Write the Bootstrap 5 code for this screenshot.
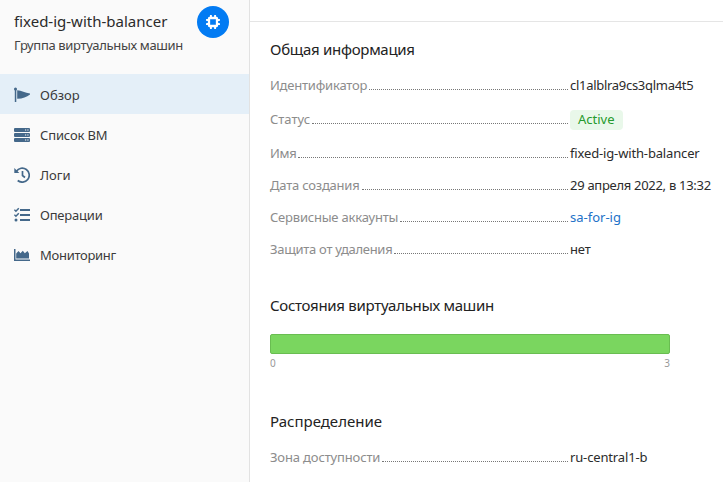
<!DOCTYPE html>
<html lang="ru">
<head>
<meta charset="utf-8">
<meta name="viewport" content="width=device-width, initial-scale=1">
<title>fixed-ig-with-balancer</title>
<link href="https://cdn.jsdelivr.net/npm/bootstrap@5.3.0/dist/css/bootstrap.min.css" rel="stylesheet">
<style>
body{font:13px/20px "Noto Sans","Open Sans",sans-serif;color:#2b2b2b;background:#fff}
.shell{height:482px}
.sidebar{width:250px;background:#fafafa;border-right:1px solid #e2e2e2}
.side-head{height:74px;padding:11px 20px 0 14px}
.side-title{font-size:15px;line-height:20px}
.side-sub{line-height:20px;margin-top:4px;color:#444;letter-spacing:-.34px}
.avatar-dot{width:32px;height:32px;background:#027bf3;margin-top:-5px}
.side-nav .nav-link{height:40px;padding:2px 0 0 14px;color:#3a3a3a;gap:10px;line-height:20px}
.side-nav .nav-link.active{background:#e4eff8}
.side-nav svg{color:#44688a;margin-top:-1px}
.topline{height:22px;border-bottom:1px solid #e5e5e5}
.content{padding:17px 0 0 20px}
.section-title{font-size:15px;line-height:20px;font-weight:400;color:#222;margin:0 0 16px}
.section-gap{margin-top:36px}
.info-row{height:20px;margin-bottom:12px}
.info-row.tall{margin-bottom:14px}
.info-row:last-child{margin-bottom:0}
.info-label{width:300px;color:#8c8c8c}
.info-label::after{content:"";flex:1;height:15px;margin:0 2px;border-bottom:1px dotted #777}
.status-badge{background:#e9f8ea;color:#259a2c;border-radius:4px;height:20px;line-height:19px;margin-top:1px;padding:0 8px}
.account-link{color:#2272c8}
.vm-bar{width:400px;height:20px;margin-top:19px;background:#7ad65f;border:1px solid #69bd51;border-radius:2px}
.scale{width:400px;font-size:10px;line-height:18px;color:#999}
.zone{margin-top:39px}
.ls-1{letter-spacing:-.15px}
.ls-2{letter-spacing:-.21px}
.ls-3{letter-spacing:-.29px}
</style>
<script src="https://cdn.jsdelivr.net/npm/bootstrap@5.3.0/dist/js/bootstrap.bundle.min.js"></script>
</head>
<body>
<div class="shell d-flex overflow-hidden">
<aside class="sidebar flex-shrink-0">
<div class="side-head d-flex justify-content-between">
<div class="text-nowrap"><div class="side-title">fixed-ig-with-balancer</div><div class="side-sub">Группа виртуальных машин</div></div>
<div class="avatar-dot rounded-circle d-flex align-items-center justify-content-center flex-shrink-0">
<svg width="14" height="14" viewBox="0 0 14 14" fill="none" stroke="#fff"><rect x="3" y="3" width="8" height="8" rx=".5" stroke-width="2.300"/><path d="M4.900.8v2M9.100.8v2M4.900 11.200v2M9.100 11.200v2M.8 4.900h2M.8 9.100h2M11.200 4.900h2M11.200 9.100h2" stroke-width="2" stroke-linecap="round"/></svg>
</div>
</div>
<nav class="side-nav nav flex-column">
<a class="nav-link active d-flex align-items-center" href="#"><svg width="16" height="16" viewBox="0 0 16 16" fill="currentColor"><circle cx="1.500" cy="2" r="1.500"/><path d="M.8 2h1.500v13H.8zM3.200 3.200C7.500 3.400 11 5.700 16 6.500v1C12.500 10.200 9 11.600 3.200 11.800z"/></svg><span>Обзор</span></a>
<a class="nav-link d-flex align-items-center" href="#"><svg width="16" height="16" viewBox="0 0 16 16" fill="currentColor"><rect y="1" width="16" height="4" rx="1"/><rect y="6" width="16" height="4" rx="1"/><rect y="11" width="16" height="4" rx="1"/><path d="M11 2.500h1.200v1H11zM13.300 2.500h1.200v1h-1.200zM11 7.500h1.200v1H11zM13.300 7.500h1.200v1h-1.200zM11 12.500h1.200v1H11zM13.300 12.500h1.200v1h-1.200z" fill="#fafafa"/></svg><span class="ls-1">Список ВМ</span></a>
<a class="nav-link d-flex align-items-center" href="#"><svg width="16" height="16" viewBox="0 0 16 16" fill="none" stroke="currentColor" stroke-width="1.700"><path d="M2.400 4.300A7 7 0 1 1 3.700 13.500M8.500 4v4.500l2.500 2"/><path d="M.3 1v5h5z" fill="currentColor" stroke="none"/></svg><span>Логи</span></a>
<a class="nav-link d-flex align-items-center" href="#"><svg width="16" height="16" viewBox="0 0 16 16" fill="none" stroke="currentColor"><path d="M6 3h10M6 8h10M6 13h10" stroke-width="1.900"/><path d="M.4 2.700l1.500 1.500L4.800 1.200M.4 7.700l1.500 1.500 2.900-3" stroke-width="1.500"/><circle cx="2" cy="13" r="1.500" fill="currentColor" stroke="none"/></svg><span class="ls-2">Операции</span></a>
<a class="nav-link d-flex align-items-center" href="#"><svg width="16" height="16" viewBox="0 0 16 16" fill="currentColor"><path d="M0 2h1.500v10.500H16V14H0zM2.200 11.500V6.500L4.500 4l2 2.200L8.800 3.800l2 2.400L13.500 4 15 6.500v5z"/></svg><span class="ls-3">Мониторинг</span></a>
</nav>
</aside>
<main class="flex-grow-1 text-nowrap">
<div class="topline"></div>
<div class="content">
<section>
<h2 class="section-title ls-3">Общая информация</h2>
<div class="info-row tall d-flex"><div class="info-label d-flex ls-2">Идентификатор</div><span class="ls-3">cl1alblra9cs3qlma4t5</span></div>
<div class="info-row tall d-flex"><div class="info-label d-flex">Статус</div><span class="status-badge">Active</span></div>
<div class="info-row d-flex"><div class="info-label d-flex ls-3">Имя</div><span class="ls-1">fixed-ig-with-balancer</span></div>
<div class="info-row d-flex"><div class="info-label d-flex ls-2">Дата создания</div><span class="ls-3">29 апреля 2022, в 13:32</span></div>
<div class="info-row d-flex"><div class="info-label d-flex ls-2">Сервисные аккаунты</div><a class="account-link text-decoration-none" href="#">sa-for-ig</a></div>
<div class="info-row d-flex"><div class="info-label d-flex ls-3">Защита от удаления</div><span class="ls-1">нет</span></div>
</section>
<section class="section-gap"><h2 class="section-title ls-3">Состояния виртуальных машин</h2><div class="vm-bar"></div><div class="scale d-flex justify-content-between"><span>0</span><span>3</span></div></section>
<section class="zone"><h2 class="section-title">Распределение</h2><div class="info-row d-flex"><div class="info-label d-flex ls-1">Зона доступности</div><span class="ls-1">ru-central1-b</span></div></section>
</div>
</main>
</div>
</body>
</html>
